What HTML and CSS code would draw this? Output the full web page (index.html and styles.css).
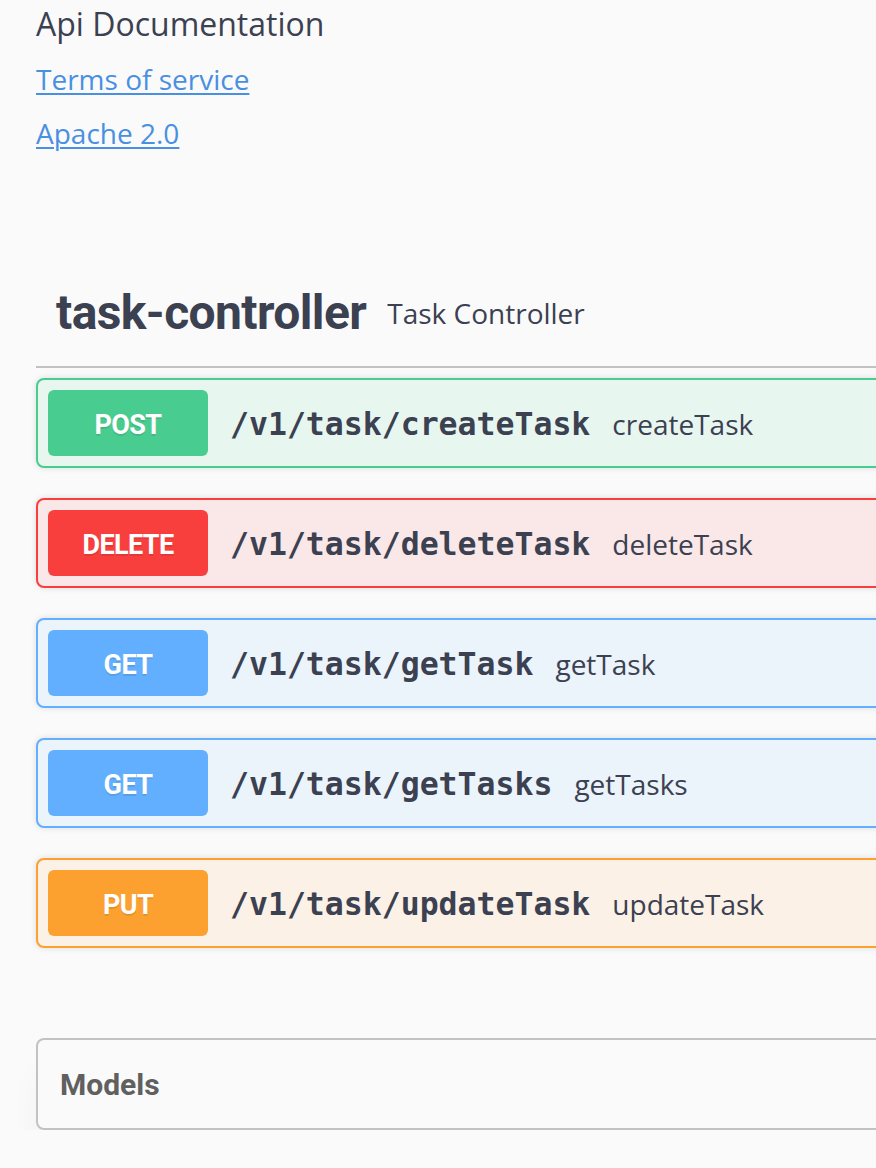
FILE: index.html
```html
<!DOCTYPE html>
<html>
<head>
<meta charset="utf-8">
<link rel="stylesheet" href="styles.css">
</head>
<body>
<div class="page">
  <div class="info">
    <div class="desc">Api Documentation</div>
    <div class="link-row"><a href="#" class="link">Terms of service</a></div>
    <div class="link-row"><a href="#" class="link">Apache 2.0</a></div>
  </div>

  <div class="tag-section">
    <h4 class="tag">
      <span class="tag-name">task-controller</span>
      <span class="tag-desc">Task Controller</span>
    </h4>

    <div class="opblock post">
      <span class="method">POST</span>
      <span class="path">/v1/task/createTask</span>
      <span class="summary">createTask</span>
    </div>
    <div class="opblock delete">
      <span class="method">DELETE</span>
      <span class="path">/v1/task/deleteTask</span>
      <span class="summary">deleteTask</span>
    </div>
    <div class="opblock get">
      <span class="method">GET</span>
      <span class="path">/v1/task/getTask</span>
      <span class="summary">getTask</span>
    </div>
    <div class="opblock get">
      <span class="method">GET</span>
      <span class="path">/v1/task/getTasks</span>
      <span class="summary">getTasks</span>
    </div>
    <div class="opblock put">
      <span class="method">PUT</span>
      <span class="path">/v1/task/updateTask</span>
      <span class="summary">updateTask</span>
    </div>
  </div>

  <section class="models">
    <h4 class="models-title">Models</h4>
  </section>
</div>
</body>
</html>
```

FILE: styles.css
```css
html, body {
  margin: 0;
  padding: 0;
  background: #fafafa;
  overflow: hidden;
}
.page {
  width: 1100px;
  padding-left: 36px;
  color: #3b4151;
  font-family: "Open Sans", sans-serif;
}
.info {
  display: flex;
  flex-direction: column;
}
.desc {
  font-size: 32px;
  line-height: 48px;
  color: #3b4151;
}
.link-row {
  font-size: 28px;
  line-height: 54px;
}
.info .desc + .link-row {
  margin-top: 4px;
}
.link {
  color: #4990e2;
  text-decoration: underline;
  text-underline-offset: 3px;
  text-decoration-thickness: 2px;
}
.tag-section {
  margin-top: 100px;
}
.tag {
  margin: 0 0 10px 0;
  padding: 20px 40px 20px 20px;
  border-bottom: 2px solid rgba(59, 65, 81, 0.3);
  display: flex;
  align-items: center;
  height: 66px;
}
.tag-name {
  font-family: Roboto, "Liberation Sans", sans-serif;
  font-weight: 700;
  font-size: 48px;
  line-height: 66px;
  color: #3b4151;
  letter-spacing: -0.6px;
}
.tag-desc {
  font-family: "Open Sans", sans-serif;
  font-weight: 400;
  font-size: 28px;
  margin-left: 21px;
  color: #3b4151;
}
.opblock {
  display: flex;
  align-items: center;
  padding: 10px;
  border: 2px solid;
  border-radius: 8px;
  margin-bottom: 30px;
  box-shadow: 0 0 6px rgba(0, 0, 0, 0.12);
}
.method {
  width: 160px;
  height: 66px;
  box-sizing: border-box;
  padding-top: 3px;
  border-radius: 6px;
  display: flex;
  align-items: center;
  justify-content: center;
  color: #fff;
  font-family: Roboto, "Liberation Sans", sans-serif;
  font-weight: 700;
  font-size: 27px;
  letter-spacing: -0.6px;
  text-shadow: 0 2px 0 rgba(0, 0, 0, 0.1);
  flex: none;
}
.path {
  font-family: "DejaVu Sans Mono", "Liberation Mono", monospace;
  font-weight: 700;
  font-size: 31.5px;
  padding: 2px 20px 0 20px;
  color: #3b4151;
  margin-left: 2px;
}
.summary {
  font-size: 28px;
  padding-top: 2px;
  margin-left: 2px;
  color: #3b4151;
}
.post { background: #e8f6f0; border-color: #49cc90; }
.post .method { background: #49cc90; }
.delete { background: #fae7e7; border-color: #f93e3e; }
.delete .method { background: #f93e3e; }
.get { background: #ebf3fb; border-color: #61affe; }
.get .method { background: #61affe; }
.put { background: #fbf1e6; border-color: #fca130; }
.put .method { background: #fca130; }

.models {
  margin-top: 90px;
  border: 2px solid rgba(59, 65, 81, 0.3);
  border-radius: 8px;
  height: 88px;
  display: flex;
  align-items: center;
  padding-left: 22px;
  box-shadow: 0 34px 30px rgba(0, 0, 0, 0.035);
}
.models-title {
  margin: 0;
  font-family: Roboto, "Liberation Sans", sans-serif;
  font-weight: 700;
  font-size: 30px;
  color: #606060;
}
```
